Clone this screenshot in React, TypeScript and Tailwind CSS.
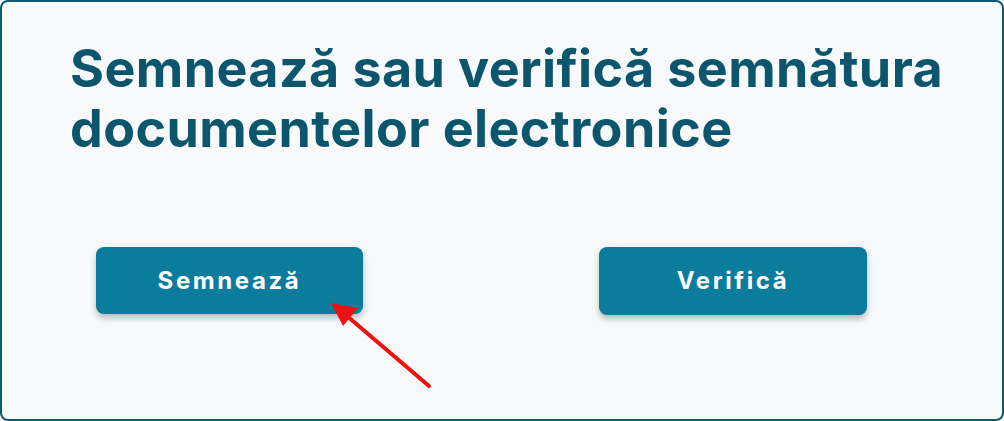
import React from "react";

export default function App() {
  return (
    <div className="w-[1004px] h-[421px] bg-white">
      <div
        className="relative w-full h-full rounded-[8px] border-2 border-[#0d5a6e] bg-[#f8f9fb] overflow-hidden"
        style={{ fontFamily: "Inter, 'Liberation Sans', sans-serif" }}
      >
        {/* Heading */}
        <h1 className="pl-[68px] pt-[37px] text-[52px] leading-[60px] font-bold text-[#0b566c] tracking-[0.4px]">
          Semnează sau verifică semnătura
          <br />
          documentelor electronice
        </h1>

        {/* Actions */}
        <div className="flex gap-[236px] pl-[94px] pt-[88px]">
          <button className="w-[267px] h-[67px] rounded-[8px] bg-[#0a7d9c] text-white text-[24px] font-bold tracking-[2.6px] shadow-[0_4px_6px_rgba(0,0,0,0.25)]">
            Semnează
          </button>
          <button className="w-[268px] h-[68px] rounded-[8px] bg-[#0a7d9c] text-white text-[24px] font-bold tracking-[2.6px] shadow-[0_4px_6px_rgba(0,0,0,0.25)]">
            Verifică
          </button>
        </div>

        {/* Annotation arrow */}
        <svg
          className="absolute left-0 top-0 pointer-events-none"
          width="1004"
          height="421"
        >
          <line x1="427" y1="384" x2="345" y2="314" stroke="#ee1111" strokeWidth="4" strokeLinecap="round" />
          <polygon points="329,301 356,306 341,324" fill="#ee1111" />
        </svg>
      </div>
    </div>
  );
}
